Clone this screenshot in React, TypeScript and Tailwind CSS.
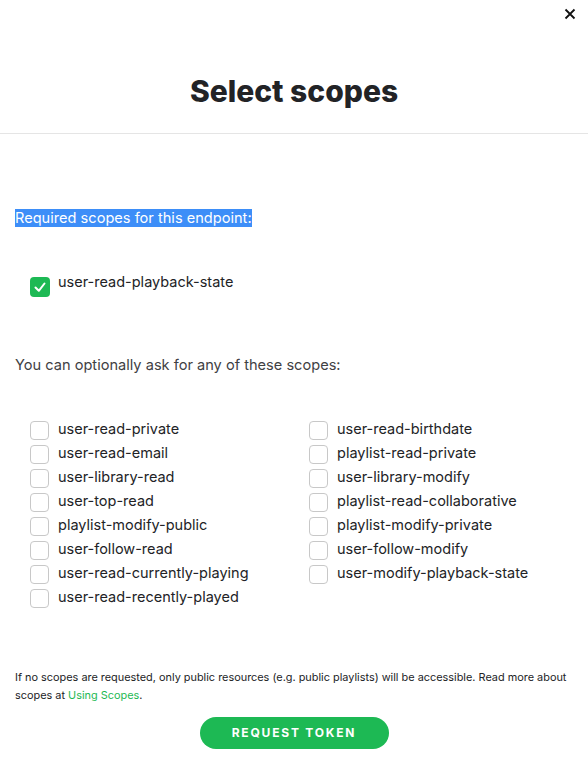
import React from "react";

const left = [
  "user-read-private",
  "user-read-email",
  "user-library-read",
  "user-top-read",
  "playlist-modify-public",
  "user-follow-read",
  "user-read-currently-playing",
  "user-read-recently-played",
];
const right = [
  "user-read-birthdate",
  "playlist-read-private",
  "user-library-modify",
  "playlist-read-collaborative",
  "playlist-modify-private",
  "user-follow-modify",
  "user-modify-playback-state",
];

function Box() {
  return <span className="mt-[2px] h-[19px] w-[19px] shrink-0 rounded-[4px] border border-[#c8c8c8] bg-white" />;
}

function Item({ label }: { label: string }) {
  return (
    <div className="flex h-[24px] items-start gap-[9px]">
      <Box />
      <span className="text-[14.5px] leading-[20px] text-[#222326]">{label}</span>
    </div>
  );
}

export default function App() {
  return (
    <div className="relative h-[759px] w-[588px] bg-white" style={{ fontFamily: "Inter, 'Noto Sans', sans-serif" }}>
      <button className="absolute right-[12px] top-[6px] text-[#111]">
        <svg width="12" height="12" viewBox="0 0 12 12" className="mt-[2px]">
          <path d="M1.5 1.5 L10.5 10.5 M10.5 1.5 L1.5 10.5" stroke="#111" strokeWidth="1.8" />
        </svg>
      </button>
      <div className="flex h-[134px] items-end justify-center border-b border-[#e5e5e5] pb-[23px]">
        <h1 className="text-[30px] font-extrabold leading-[38px] text-[#222326]">Select scopes</h1>
      </div>
      <div className="px-[15px]">
        <div className="pt-[71px]">
          <span className="bg-[#3d8ef8] text-[14.6px] leading-[18px] text-white">Required scopes for this endpoint:</span>
        </div>
        <div className="mt-[48px] flex items-start gap-[8px] pl-[15px]">
          <span className="flex h-[20px] w-[20px] items-center justify-center rounded-[4px] bg-[#1db954]">
            <svg width="14" height="14" viewBox="0 0 14 14">
              <path d="M2.5 7.5 L5.8 10.8 L11.5 3.5" fill="none" stroke="white" strokeWidth="2" strokeLinecap="round" strokeLinejoin="round" />
            </svg>
          </span>
          <span className="-mt-[5px] text-[14.5px] leading-[20px] text-[#222326]">user-read-playback-state</span>
        </div>
        <p className="mt-[58px] text-[14.6px] leading-[20px] text-[#3f4144]">You can optionally ask for any of these scopes:</p>
        <div className="mt-[44px] flex pl-[15px]">
          <div className="w-[279px]">
            {left.map((l) => (
              <Item key={l} label={l} />
            ))}
          </div>
          <div>
            {right.map((l) => (
              <Item key={l} label={l} />
            ))}
          </div>
        </div>
        <p className="mt-[57px] text-[10.9px] leading-[18px] text-[#222326]">
          If no scopes are requested, only public resources (e.g. public playlists) will be accessible. Read more about scopes at{" "}
          <a className="text-[#1db954]">Using Scopes</a>.
        </p>
        <div className="mt-[13px] flex justify-center">
          <button className="h-[32px] w-[189px] rounded-full bg-[#1db954] text-[12px] font-bold tracking-[1.8px] text-white">
            REQUEST TOKEN
          </button>
        </div>
      </div>
    </div>
  );
}
